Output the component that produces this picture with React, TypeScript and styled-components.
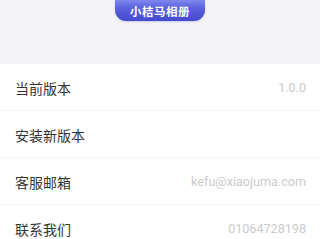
import styled, { createGlobalStyle } from 'styled-components'

const GlobalStyle = createGlobalStyle`
  body {
    margin: 0;
    background: #ffffff;
    font-family: "Noto Sans CJK SC", "Liberation Sans", sans-serif;
  }
`

const Page = styled.div`
  width: 320px;
  height: 239px;
  overflow: hidden;
  background: #ffffff;
`

const Header = styled.div`
  height: 64px;
  background: #f4f4f6;
  display: flex;
  justify-content: center;
  align-items: flex-start;
`

const Badge = styled.div`
  width: 90px;
  height: 21px;
  border-radius: 0 0 11px 11px;
  background: linear-gradient(180deg, #8088ee 0%, #5c64de 35%, #4c53d4 75%, #434acb 100%);
  color: #ffffff;
  font-size: 11.5px;
  font-weight: 700;
  display: flex;
  align-items: center;
  justify-content: center;
  letter-spacing: 0.5px;
  box-shadow: 0 1px 2px rgba(70, 77, 207, 0.25);
`

const List = styled.div`
  display: flex;
  flex-direction: column;
`

const Row = styled.div`
  height: 46px;
  padding: 0 14px 0 15px;
  display: flex;
  align-items: center;
  justify-content: space-between;
  border-bottom: 1px solid #f6f6f6;
`

const Label = styled.span`
  font-size: 14px;
  color: #353535;
  padding-top: 1px;
`

const Value = styled.span`
  font-size: 12.6px;
  color: #cbcbcb;
  font-family: "Roboto", "Liberation Sans", sans-serif;
`

const rows = [
  { label: '当前版本', value: '1.0.0' },
  { label: '安装新版本', value: '' },
  { label: '客服邮箱', value: 'kefu@xiaojuma.com' },
  { label: '联系我们', value: '01064728198' },
]

export default function App() {
  return (
    <Page>
      <GlobalStyle />
      <Header>
        <Badge>小桔马相册</Badge>
      </Header>
      <List>
        {rows.map((r) => (
          <Row key={r.label}>
            <Label>{r.label}</Label>
            <Value>{r.value}</Value>
          </Row>
        ))}
      </List>
    </Page>
  )
}
